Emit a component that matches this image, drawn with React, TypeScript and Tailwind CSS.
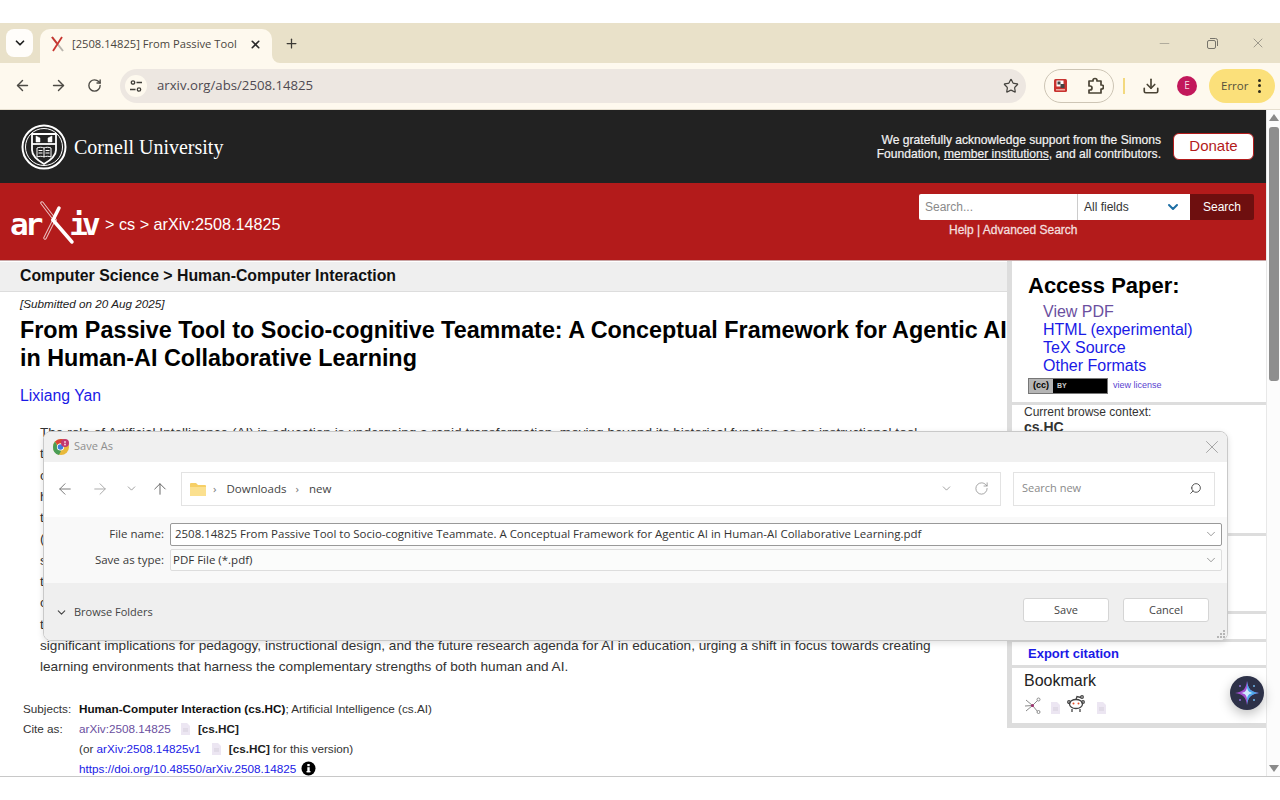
import React from "react";
import { ArrowLeft, ArrowRight, RotateCw, Star, Download, ChevronDown, X, Plus, Minus, ArrowUp, Search } from "lucide-react";

const UI = "font-['Open_Sans','Noto_Sans',sans-serif]";

function FileIcon({ className = "" }: { className?: string }) {
  return (
    <svg width="9" height="12" viewBox="0 0 9 12" className={className}>
      <path d="M0 0h6l3 3v9H0z" fill="#ece6f2" />
      <path d="M2 6h5M2 8h5" stroke="#d5cfdb" strokeWidth="1" />
    </svg>
  );
}

function CornellLogo() {
  return (
    <svg width="46" height="46" viewBox="0 0 46 46" fill="none" stroke="#fff">
      <circle cx="23" cy="23" r="21.5" strokeWidth="2" />
      <circle cx="23" cy="23" r="18.500" strokeWidth="1" />
      <path d="M11 10h24v16c0 6-5 10-12 14-7-4-12-8-12-14z" strokeWidth="1.800" />
      <path d="M11 20h24" strokeWidth="1.800" />
      <path d="M15 12l4 2v4h-4zM27 14l4-2v6h-4z" fill="#fff" strokeWidth="0.5" />
      <path d="M16 24c2.500-1 5-1 7 0 2-1 4.500-1 7 0v9c-2.500-1-5-1-7 0-2-1-4.500-1-7 0zM23 24v9M17.500 26.500h4M17.500 29h4M24.500 26.500h4M24.500 29h4" strokeWidth="1" />
    </svg>
  );
}

function ArxivLogo() {
  return (
    <div className="relative flex h-[50px] w-[91px] items-center font-['DejaVu_Sans_Mono',monospace] text-[31px] font-bold leading-none text-white">
      <span className="tracking-[-4px]">ar</span>
      <span className="w-[30px]" />
      <span className="tracking-[-6px]">iv</span>
      <svg className="absolute left-[30px] top-[2px]" width="36" height="46" viewBox="0 0 36 46" fill="none">
        <path d="M2 2l13 17" stroke="#fff" strokeOpacity="0.75" strokeWidth="3.500" strokeLinecap="round" />
        <path d="M2 2l13 17" stroke="#b31b1b" strokeWidth="1.500" strokeLinecap="round" />
        <path d="M5 37l8-16" stroke="#fff" strokeOpacity="0.75" strokeWidth="3.500" strokeLinecap="round" />
        <path d="M5 37l8-16" stroke="#b31b1b" strokeWidth="1.500" strokeLinecap="round" />
        <path d="M13 19l19 22" stroke="#fff" strokeWidth="3.500" strokeLinecap="round" />
        <path d="M13 19l6-12" stroke="#fff" strokeWidth="3.500" strokeLinecap="round" />
      </svg>
    </div>
  );
}

function ChromeLogo() {
  return (
    <svg width="18" height="18" viewBox="0 0 18 18">
      <circle cx="9" cy="9" r="8" fill="#e8b93b" />
      <path d="M9 1a8 8 0 0 1 7 4H9a4 4 0 0 0-3.500 2L3 3.500A8 8 0 0 1 9 1z" fill="#d9433a" />
      <path d="M1 9a8 8 0 0 1 2-5.500L6 9l3 4-2 4A8 8 0 0 1 1 9z" fill="#4a9d55" />
      <circle cx="8.500" cy="9" r="3.600" fill="#fff" />
      <circle cx="8.500" cy="9" r="2.800" fill="#3d7fe0" />
      <circle cx="13" cy="5" r="4" fill="#c2376f" />
      <circle cx="13" cy="4" r="1" fill="#f3c6d8" />
      <circle cx="13" cy="6.500" r="1" fill="#f3c6d8" />
    </svg>
  );
}

const abstractLeads = ["t", "c", "h", "t", "(", "s", "t", "c", "t"];

export default function App() {
  return (
    <div className="relative flex h-[800px] w-[1280px] flex-col overflow-hidden bg-white font-['Liberation_Sans',Arial,sans-serif]">
      <div className="h-[23px] shrink-0 bg-white" />

      {/* tab strip */}
      <div className={`relative flex h-[40px] shrink-0 items-end bg-[#e9e1c9] ${UI}`}>
        <div className="mb-[6px] ml-[6px] flex h-[28px] w-[27px] items-center justify-center rounded-[8px] bg-[#fffdfa]">
          <ChevronDown size={14} strokeWidth={3} color="#1f1f1f" />
        </div>
        <div className="relative ml-[7px] flex h-[34px] w-[232px] items-center rounded-t-[10px] bg-[#fef9ee] pb-[4px] pl-[10px]">
          <svg width="16" height="16" viewBox="0 0 16 16" fill="none">
            <path d="M2 1l11 14" stroke="#b9b5ad" strokeWidth="2" />
            <path d="M2 1l5 6.500" stroke="#c8352f" strokeWidth="2" />
            <path d="M12 1L3 15" stroke="#c8352f" strokeWidth="1.800" />
          </svg>
          <span className="ml-[6px] w-[166px] whitespace-nowrap text-[11.2px] text-[#4a4640]">[2508.14825] From Passive Tool</span>
          <X size={13} strokeWidth={3} color="#2a2a2a" className="ml-[11px]" />
          <svg className="absolute bottom-0 right-[-8px]" width="8" height="8" viewBox="0 0 8 8">
            <path d="M0 0v8h8A8 8 0 0 1 0 0z" fill="#fef9ee" />
          </svg>
        </div>
        <Plus size={15} strokeWidth={2} color="#3c3a35" className="mb-[12px] ml-[12px]" />
        <div className="flex-1" />
        <div className="mb-[12px] flex items-center pr-[14px]">
          <Minus size={15} strokeWidth={1} color="#8d8a80" />
          <svg className="ml-[35px]" width="11" height="11" viewBox="0 0 11 11" fill="none" stroke="#77746b" strokeWidth="1">
            <rect x="0.500" y="2.500" width="8" height="8" rx="1.500" />
            <path d="M3 0.500h5.500a2 2 0 0 1 2 2V8" />
          </svg>
          <X size={16} strokeWidth={1} color="#77746b" className="ml-[32px]" />
        </div>
      </div>

      {/* toolbar */}
      <div className={`flex h-[47px] shrink-0 items-center border-b border-[#e6dfcf] bg-[#fef9ee] pb-[1px] ${UI}`}>
        <ArrowLeft size={17} strokeWidth={2} color="#4c4a44" className="ml-[14px]" />
        <ArrowRight size={17} strokeWidth={2} color="#4c4a44" className="ml-[19px]" />
        <RotateCw size={15} strokeWidth={2.200} color="#4c4a44" className="ml-[20px]" />
        <div className="ml-[18px] flex h-[34px] w-[906px] items-center rounded-full bg-[#ede7e1] pl-[5px] pr-[7px]">
          <div className="flex h-[22px] w-[22px] items-center justify-center rounded-full bg-[#fef9ee]">
            <svg width="14" height="14" viewBox="0 0 14 14" fill="none" stroke="#3f3d38" strokeWidth="1.300">
              <circle cx="4" cy="3.500" r="1.700" />
              <path d="M7.500 3.500H13M1 10.500h5.500" />
              <circle cx="10" cy="10.500" r="1.700" />
            </svg>
          </div>
          <span className="ml-[10px] text-[13.2px] text-[#4f4a52]">arxiv.org/abs/2508.14825</span>
          <div className="flex-1" />
          <Star size={16} strokeWidth={1.800} color="#45433e" />
        </div>
        <div className="ml-[18px] flex h-[34px] w-[70px] items-center justify-between rounded-full border border-[#cdc5b5] px-[9px]">
          <svg width="13" height="13" viewBox="0 0 13 13">
            <rect width="13" height="13" rx="1.500" fill="#c8332f" />
            <rect x="2.500" y="1.500" width="7" height="6" fill="#fff" />
            <rect x="3.500" y="2.500" width="3" height="3" fill="#444" />
            <rect x="6.500" y="5" width="4" height="4" fill="#444" />
            <rect x="2" y="10" width="9" height="1.500" fill="#f0a8a0" />
          </svg>
          <svg width="17" height="17" viewBox="0 0 17 17" fill="none" stroke="#4a4435" strokeWidth="1.700" strokeLinejoin="round">
            <path d="M2 4h4v-.5a2 2 0 0 1 4 0V4h4v4h.5a2 2 0 0 1 0 4H14v4H2v-3h1a2 2 0 0 0 0-4H2z" />
          </svg>
        </div>
        <div className="ml-[9px] h-[16px] w-[2px] bg-[#f3d97e]" />
        <Download size={18} strokeWidth={2.200} color="#4a4435" className="ml-[17px]" />
        <div className="ml-[17px] flex h-[20px] w-[20px] items-center justify-center rounded-full bg-[#c2185b] text-[10px] text-[#f6d9e3]">E</div>
        <div className="ml-[12px] flex h-[34px] w-[66px] items-center rounded-full bg-[#fbe07a] pl-[12px]">
          <span className="text-[11.5px] text-[#55503c]">Error</span>
          <span className="ml-[10px] flex flex-col gap-[2.500px]">
            <span className="h-[3px] w-[3px] rounded-full bg-[#2e2a1c]" />
            <span className="h-[3px] w-[3px] rounded-full bg-[#2e2a1c]" />
            <span className="h-[3px] w-[3px] rounded-full bg-[#2e2a1c]" />
          </span>
        </div>
      </div>

      {/* page */}
      <div className="flex h-[666px] shrink-0">
        <div className="w-[1266px] overflow-hidden">
          <div className="flex h-[73px] items-center justify-between bg-[#222222] pl-[21px] pr-[12px]">
            <div className="flex items-center">
              <CornellLogo />
              <span className="ml-[7px] mt-[1px] font-['Liberation_Serif',serif] text-[20px] text-white">Cornell University</span>
            </div>
            <div className="flex items-center">
              <p className="text-right text-[12.1px] leading-[14px] text-[#f2f2f2] [-webkit-text-stroke:0.2px_#f2f2f2]">
                We gratefully acknowledge support from the Simons
                <br />
                Foundation, <span className="underline">member institutions</span>, and all contributors.
              </p>
              <div className="ml-[12px] flex h-[27px] w-[81px] items-center justify-center rounded-[6px] border border-[#b31b1b] bg-white text-[15px] text-[#b31b1b]">Donate</div>
            </div>
          </div>

          <div className="flex h-[78px] items-start justify-between border-b border-[#c9a5a5] bg-[#b31b1b] pl-[10px] pr-[12px]">
            <div className="mt-[16px] flex items-center">
              <ArxivLogo />
              <span className="ml-[4px] mt-[1px] text-[16.2px] text-white">&gt; cs &gt; arXiv:2508.14825</span>
            </div>
            <div className="mt-[11px] flex flex-col">
              <div className="flex h-[26px]">
                <div className="flex w-[158px] items-center rounded-l-[2px] bg-white pl-[6px] text-[12px] text-[#8a8a8a]">Search...</div>
                <div className="flex w-[113px] items-center justify-between border-l border-[#ccc] bg-white pl-[6px] pr-[9px] text-[12px] text-[#333]">
                  All fields
                  <ChevronDown size={16} strokeWidth={3} color="#1c6ea4" />
                </div>
                <div className="flex w-[64px] items-center justify-center rounded-r-[2px] bg-[#6e0f0f] text-[12px] text-white">Search</div>
              </div>
              <div className="ml-[30px] mt-[3px] text-[12px] leading-[15px] text-[#f4dede] [-webkit-text-stroke:0.3px_#f4dede]">Help | Advanced Search</div>
            </div>
          </div>

          <div className="flex h-[515px]">
            <div className="w-[1007px] shrink-0">
              <div className="mt-[1px] flex h-[30px] items-center border-b border-[#ddd] bg-[#efefef] pb-[2px] pl-[20px] text-[15.83px] font-bold text-[#111]">Computer Science &gt; Human-Computer Interaction</div>
              <div className="ml-[20px] mt-[5px] text-[11.7px] italic leading-[14px] text-[#222]">[Submitted on 20 Aug 2025]</div>
              <h1 className="ml-[20px] mt-[5px] whitespace-nowrap text-[23.35px] font-bold leading-[28px] text-black">
                From Passive Tool to Socio-cognitive Teammate: A Conceptual Framework for Agentic AI
                <br />
                in Human-AI Collaborative Learning
              </h1>
              <div className="ml-[20px] mt-[15px] text-[15.8px] leading-[18px] text-[#1a1ae6]">Lixiang Yan</div>
              <div className="ml-[40px] mt-[17px] text-[13.6px] leading-[21.3px] text-[#333]">
                <div className="whitespace-nowrap">The role of Artificial Intelligence (AI) in education is undergoing a rapid transformation, moving beyond its historical function as an instructional tool</div>
                {abstractLeads.map((c, i) => (
                  <div key={i}>{c}</div>
                ))}
                <div className="whitespace-nowrap">significant implications for pedagogy, instructional design, and the future research agenda for AI in education, urging a shift in focus towards creating</div>
                <div className="whitespace-nowrap">learning environments that harness the complementary strengths of both human and AI.</div>
              </div>
              <div className="ml-[23px] mt-[21px] grid grid-cols-[56px_1fr] text-[11.73px] leading-[20px] text-[#333]">
                <span>Subjects:</span>
                <span><b className="font-bold text-[#111]">Human-Computer Interaction (cs.HC)</b>; Artificial Intelligence (cs.AI)</span>
                <span>Cite as:</span>
                <span className="flex items-center">
                  <span className="text-[#6b4fa0]">arXiv:2508.14825</span>
                  <FileIcon className="ml-[10px]" />
                  <b className="ml-[8px] text-[#222]">[cs.HC]</b>
                </span>
                <span />
                <span className="flex items-center">
                  (or&nbsp;<span className="text-[#1a1ae6]">arXiv:2508.14825v1</span>
                  <FileIcon className="ml-[11px]" />
                  <b className="ml-[8px] text-[#222]">[cs.HC]</b>&nbsp;for this version)
                </span>
                <span />
                <span className="flex items-center">
                  <span className="text-[#1a1ae6]">https://doi.org/10.48550/arXiv.2508.14825</span>
                  <svg className="ml-[5px]" width="15" height="15" viewBox="0 0 15 15">
                    <circle cx="7.500" cy="7.500" r="7" fill="#000" />
                    <rect x="6.300" y="6.200" width="2.400" height="5" fill="#fff" />
                    <rect x="5.500" y="10" width="4" height="1.300" fill="#fff" />
                    <rect x="6.300" y="3" width="2.400" height="2.200" fill="#fff" />
                  </svg>
                </span>
              </div>
            </div>

            {/* sidebar */}
            <div className="flex h-[467px] flex-1 flex-col">
              <div className="flex h-[144px] flex-col border-b-[3px] border-l-[5px] border-[#dddddd] pl-[16px]">
                <h2 className="mt-[12px] text-[22px] font-bold leading-[26px] text-black">Access Paper:</h2>
                <div className="ml-[15px] mt-[4px] text-[16px] leading-[18px] text-[#1a1ae6]">
                  <div className="text-[#6b4fa0]">View PDF</div>
                  <div>HTML (experimental)</div>
                  <div>TeX Source</div>
                  <div>Other Formats</div>
                </div>
                <div className="mt-[3px] flex items-center">
                  <div className="flex h-[16px] w-[80px] items-center border border-[#777] bg-black">
                    <span className="flex h-[14px] w-[24px] items-center justify-center bg-[#b5b5b5] text-[9px] font-bold text-black">(cc)</span>
                    <span className="ml-[4px] text-[7px] font-bold text-[#ccc]">BY</span>
                  </div>
                  <span className="ml-[5px] text-[9px] text-[#5a3fd0]">view license</span>
                </div>
              </div>
              <div className="h-[131px] border-b-[3px] border-l-[5px] border-[#dddddd] pl-[12px] text-[12px] leading-[15px] text-[#333]">
                <div>Current browse context:</div>
                <div className="text-[14px] font-bold">cs.HC</div>
              </div>
              <div className="h-[78px] border-b-[3px] border-l-[5px] border-[#dddddd]" />
              <div className="h-[28px] border-b-[3px] border-l-[5px] border-[#dddddd]" />
              <div className="flex h-[26px] items-center border-b-[3px] border-l-[5px] border-[#dddddd] pl-[16px] text-[13px] font-bold text-[#1a1ae6]">Export citation</div>
              <div className="h-[60px] border-b-[5px] border-l-[5px] border-[#dddddd] pl-[12px]">
                <div className="mt-[3px] text-[16px] leading-[20px] text-[#222]">Bookmark</div>
                <div className="mt-[6px] flex items-center">
                  <svg width="17" height="17" viewBox="0 0 17 17" fill="none" stroke="#8a8a8a" strokeWidth="1">
                    <path d="M8.500 8.500L2 3M8.500 8.500L14 3M8.500 8.500L2 14M8.500 8.500L14 15M8.500 8.500L1 9" />
                    <circle cx="14.500" cy="2.500" r="1.500" fill="#fff" />
                    <circle cx="14.500" cy="15" r="1.500" fill="#fff" />
                    <circle cx="8.500" cy="8.500" r="1.500" fill="#a03070" stroke="none" />
                  </svg>
                  <FileIcon className="ml-[10px] mt-[5px]" />
                  <svg className="ml-[7px] -mt-[3px]" width="19" height="18" viewBox="0 0 19 18" fill="none" stroke="#444" strokeWidth="1.300">
                    <ellipse cx="9" cy="9" rx="6.500" ry="4.500" fill="#fff" />
                    <circle cx="6.500" cy="8.500" r="1" fill="#e8502a" stroke="none" />
                    <circle cx="11.500" cy="8.500" r="1" fill="#e8502a" stroke="none" />
                    <path d="M9 4.500l1-3 4 1M5 14v3M13 14v3" />
                    <circle cx="15" cy="2" r="1.300" />
                    <circle cx="2" cy="7" r="1.300" />
                    <circle cx="16" cy="7" r="1.300" />
                  </svg>
                  <FileIcon className="ml-[11px] mt-[5px]" />
                </div>
              </div>
            </div>
          </div>
        </div>

        {/* scrollbar */}
        <div className="flex w-[14px] flex-col items-center border-l border-[#e8e8e8] bg-[#fcfcfc]">
          <div className="mt-[4px] h-0 w-0 border-x-[5px] border-b-[7px] border-x-transparent border-b-[#8a8a8a]" />
          <div className="mt-[6px] h-[254px] w-[10px] rounded-[3px] bg-[#8e8e8e]" />
          <div className="flex-1" />
          <div className="mb-[4px] h-0 w-0 border-x-[5px] border-t-[7px] border-x-transparent border-t-[#8a8a8a]" />
        </div>
      </div>

      <div className="flex-1 border-t border-[#c8c8c8] bg-white" />

      {/* floating assistant button */}
      <div className="absolute left-[1230px] top-[676px] flex h-[34px] w-[34px] items-center justify-center rounded-full bg-[#2d3148] shadow-[0_4px_12px_rgba(0,0,0,0.25)]">
        <svg width="30" height="30" viewBox="0 0 30 30">
          <path d="M15 3c1 8 4 11 12 12-8 1-11 4-12 12-1-8-4-11-12-12 8-1 11-4 12-12z" fill="#a24fd0" />
          <path d="M15 3c1 8 4 11 12 12-8 1-11 4-12 12z" fill="#4ba7e8" />
          <path d="M15 9c.6 4 2 5.400 6 6-4 .6-5.400 2-6 6-.6-4-2-5.400-6-6 4-.6 5.400-2 6-6z" fill="#cfeaff" />
          <circle cx="8" cy="8" r="1" fill="#8f6fd8" />
          <circle cx="22" cy="8" r="1" fill="#6fb5e8" />
          <circle cx="8" cy="22" r="1" fill="#8f6fd8" />
          <circle cx="22" cy="22" r="1" fill="#6fb5e8" />
        </svg>
      </div>

      {/* Save As dialog */}
      <div className={`absolute left-[43px] top-[431px] flex h-[210px] w-[1185px] flex-col overflow-hidden rounded-[8px] border border-[#c9c9c9] bg-white shadow-[0_2px_6px_rgba(0,0,0,0.12)] ${UI}`}>
        <div className="flex h-[30px] shrink-0 items-center bg-[#f0f0f0] pb-[1px] pl-[8px] pr-[4px]">
          <ChromeLogo />
          <span className="ml-[4px] text-[11px] text-[#8e8e8e]">Save As</span>
          <div className="flex-1" />
          <X size={22} strokeWidth={0.8} color="#8a8a8a" />
        </div>
        <div className="flex h-[55px] shrink-0 items-center bg-white pb-[2px] pl-[12px]">
          <ArrowLeft size={18} strokeWidth={1.300} color="#777" />
          <ArrowRight size={18} strokeWidth={1.300} color="#aaa" className="ml-[17px]" />
          <ChevronDown size={13} strokeWidth={1.300} color="#777" className="ml-[16px]" />
          <ArrowUp size={18} strokeWidth={1.300} color="#666" className="ml-[13px]" />
          <div className="ml-[12px] flex h-[34px] w-[820px] items-center border border-[#e3e3e3] pl-[8px] pr-[11px] text-[11.5px] text-[#444]">
            <svg width="16" height="14" viewBox="0 0 16 14">
              <path d="M0 2a1 1 0 0 1 1-1h5l2 2h7a1 1 0 0 1 1 1v9a1 1 0 0 1-1 1H1a1 1 0 0 1-1-1z" fill="#f6cf66" />
              <path d="M0 5h16v8a1 1 0 0 1-1 1H1a1 1 0 0 1-1-1z" fill="#fbe08f" />
            </svg>
            <span className="ml-[7px] text-[#777]">›</span>
            <span className="ml-[10px]">Downloads</span>
            <span className="ml-[9px] text-[#777]">›</span>
            <span className="ml-[10px]">new</span>
            <div className="flex-1" />
            <ChevronDown size={13} strokeWidth={1} color="#555" className="mr-[1px]" />
            <RotateCw size={15} strokeWidth={1.200} color="#888" className="ml-[20px]" />
          </div>
          <div className="ml-[12px] flex h-[34px] w-[202px] items-center justify-between border border-[#e3e3e3] pl-[8px] pr-[12px] text-[11px] text-[#8a8a8a]">
            Search new
            <Search size={13} strokeWidth={1.800} color="#555" className="-scale-x-100" />
          </div>
        </div>
        <div className="flex h-[66px] shrink-0 flex-col bg-[#f9f9f9] pt-[6px] text-[11.5px] text-[#3a3a3a]">
          <div className="flex h-[23px] items-center">
            <span className="w-[120px] pb-[1px] text-right">File name:</span>
            <div className="ml-[6px] flex h-[23px] w-[1052px] items-center justify-between rounded-[2px] border border-[#999] bg-white pb-[2px] pl-[4px] pr-[3px]">
              <span className="whitespace-nowrap text-[11.47px] text-[#333]">2508.14825 From Passive Tool to Socio-cognitive Teammate. A Conceptual Framework for Agentic AI in Human-AI Collaborative Learning.pdf</span>
              <ChevronDown size={14} strokeWidth={1} color="#555" />
            </div>
          </div>
          <div className="mt-[3px] flex h-[22px] items-center">
            <span className="w-[120px] text-right">Save as type:</span>
            <div className="ml-[6px] flex h-[22px] w-[1052px] items-center justify-between rounded-[2px] border border-[#ddd] bg-[#fbfcfb] pl-[2px] pr-[3px]">
              <span className="text-[#333]">PDF File (*.pdf)</span>
              <ChevronDown size={14} strokeWidth={1} color="#555" />
            </div>
          </div>
        </div>
        <div className="relative flex flex-1 items-center bg-[#efefef] pl-[11px] text-[11px] text-[#444]">
          <ChevronDown size={13} strokeWidth={2} color="#444" className="mt-[2px]" />
          <span className="ml-[6px] mt-[2px]">Browse Folders</span>
          <div className="flex-1" />
          <div className="mb-[3px] flex h-[24px] w-[86px] items-center justify-center rounded-[3px] border border-[#d5d5d5] bg-white">Save</div>
          <div className="mb-[3px] ml-[14px] mr-[18px] flex h-[24px] w-[86px] items-center justify-center rounded-[3px] border border-[#d5d5d5] bg-white">Cancel</div>
          <svg className="absolute bottom-[1px] right-[1px]" width="10" height="10" viewBox="0 0 10 10" fill="#b5b5b5">
            <rect x="7" y="1" width="2" height="2" />
            <rect x="4" y="4" width="2" height="2" />
            <rect x="7" y="4" width="2" height="2" />
            <rect x="1" y="7" width="2" height="2" />
            <rect x="4" y="7" width="2" height="2" />
            <rect x="7" y="7" width="2" height="2" />
          </svg>
        </div>
      </div>
    </div>
  );
}
